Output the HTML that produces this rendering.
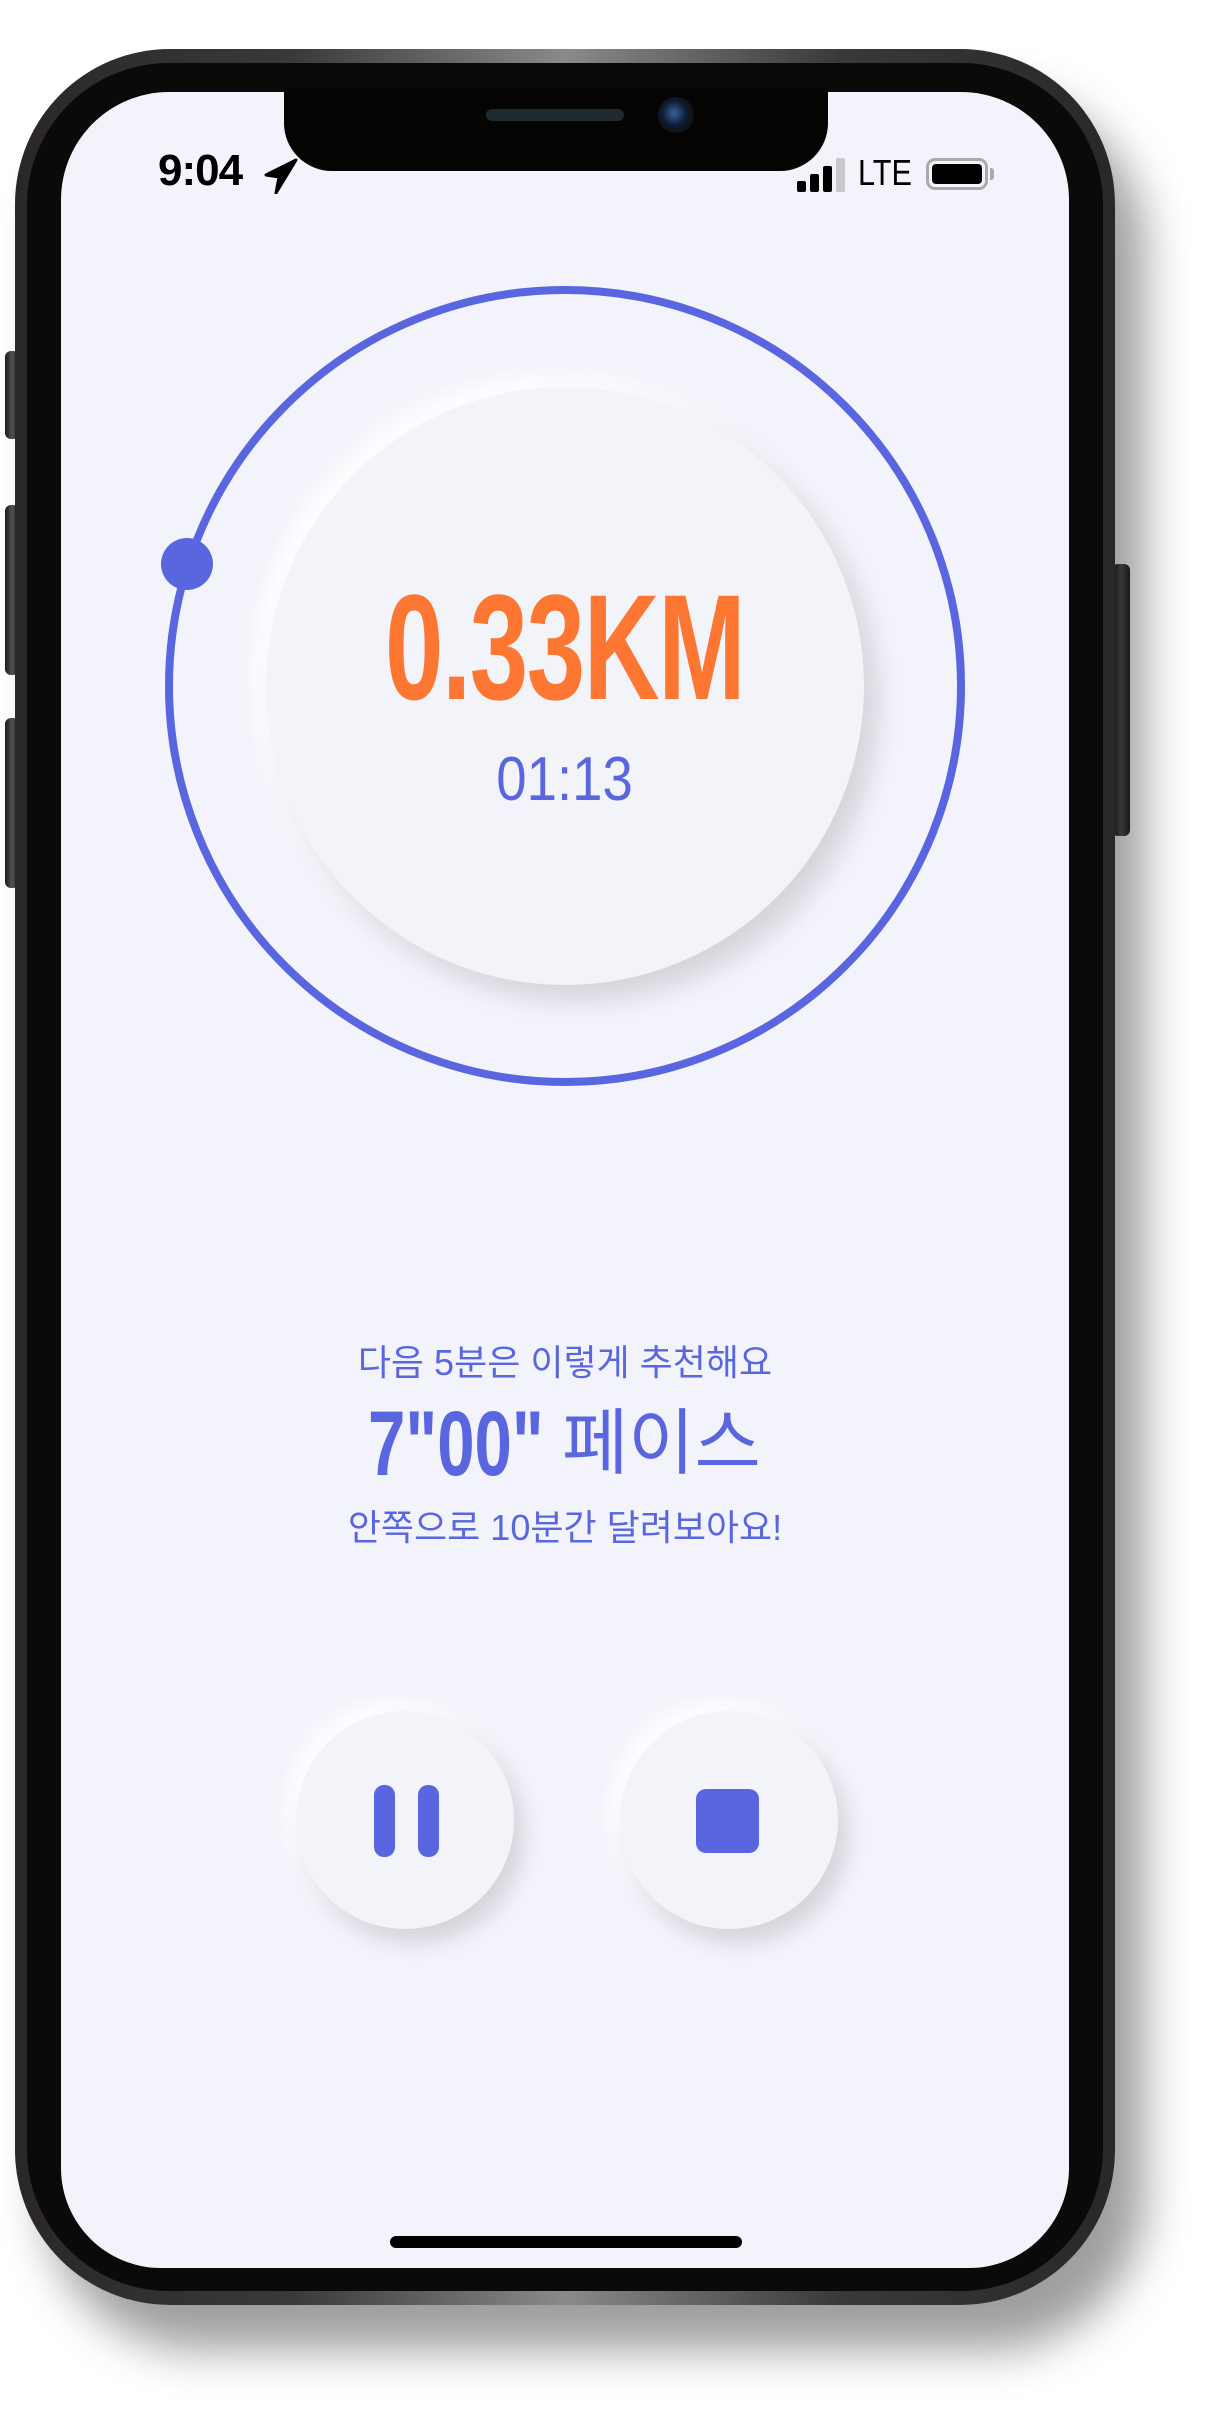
<!DOCTYPE html>
<html><head><meta charset="utf-8">
<style>
html,body{margin:0;padding:0;background:#fff;}
body{width:1210px;height:2415px;position:relative;overflow:hidden;font-family:"Liberation Sans","Noto Sans CJK KR",sans-serif;}
.abs{position:absolute;}
.btn{position:absolute;background:linear-gradient(90deg,#1a1a1a,#555 50%,#222);border-radius:6px;}
.outer{left:15px;top:49px;width:1100px;height:2256px;border-radius:155px;
 background:linear-gradient(90deg,#2a2727 0%,#3a3838 25%,#8a8a8a 50%,#3a3838 75%,#2a2727 100%);
 box-shadow:30px 45px 45px rgba(0,0,0,.38);}
.bezel{left:27px;top:63px;width:1076px;height:2228px;border-radius:142px;background:#0b0909;}
.screen{left:61px;top:92px;width:1008px;height:2176px;border-radius:108px 108px 100px 100px;background:#f3f4fb;overflow:hidden;}
.blue{color:#5a66df;}
.c{position:absolute;left:0;width:1130px;text-align:center;white-space:nowrap;}
</style></head><body>
<div class="btn" style="left:5px;top:351px;width:14px;height:88px"></div>
<div class="btn" style="left:5px;top:505px;width:14px;height:170px"></div>
<div class="btn" style="left:5px;top:718px;width:14px;height:170px"></div>
<div class="btn" style="left:1112px;top:564px;width:18px;height:272px"></div>
<div class="abs outer"></div>
<div class="abs bezel"></div>
<div class="abs screen"></div>

<!-- notch -->
<div class="abs" style="left:284px;top:88px;width:544px;height:83px;background:#060303;border-radius:0 0 48px 48px;"></div>
<div class="abs" style="left:486px;top:109px;width:138px;height:12px;background:#1e2a2e;border-radius:6px;"></div>
<div class="abs" style="left:658px;top:97px;width:36px;height:36px;border-radius:50%;background:radial-gradient(circle at 45% 45%,#3a5f9a 0,#0c1a33 45%,#111 70%,#333 100%);"></div>

<!-- status bar -->
<div class="abs" style="left:158px;top:146px;font-size:44px;font-weight:bold;color:#000;letter-spacing:-1px;">9:04</div>
<svg class="abs" style="left:264px;top:158px" width="34" height="36" viewBox="0 0 34 36"><path d="M32 2 L2 17 L15 19 L12 35 Z" fill="#000" stroke="#000" stroke-width="3" stroke-linejoin="round"/></svg>
<div class="abs" style="left:797px;top:181px;width:9px;height:11px;background:#000;border-radius:2px"></div>
<div class="abs" style="left:810px;top:174px;width:9px;height:18px;background:#000;border-radius:2px"></div>
<div class="abs" style="left:823px;top:166px;width:9px;height:26px;background:#000;border-radius:2px"></div>
<div class="abs" style="left:836px;top:158px;width:9px;height:34px;background:#c8c8cc;border-radius:2px"></div>
<div class="abs" style="left:858px;top:152px;font-size:36px;color:#000;transform:scaleX(.85);transform-origin:left;">LTE</div>
<div class="abs" style="left:926px;top:158px;width:62px;height:32px;border:3px solid #aaa;border-radius:9px;box-sizing:border-box;"></div>
<div class="abs" style="left:932px;top:164px;width:50px;height:20px;background:#000;border-radius:4px;"></div>
<div class="abs" style="left:990px;top:168px;width:4px;height:12px;background:#aaa;border-radius:0 3px 3px 0;"></div>

<!-- inner circle -->
<div class="abs" style="left:266px;top:387px;width:598px;height:598px;border-radius:50%;background:#f3f4fa;box-shadow:14px 16px 26px rgba(0,0,0,.13),-12px -12px 22px rgba(255,255,255,.9);"></div>
<!-- ring -->
<svg class="abs" style="left:0;top:0" width="1210" height="1200">
<circle cx="565" cy="686" r="396" fill="none" stroke="#5a66df" stroke-width="8"/>
<circle cx="187" cy="564" r="26" fill="#5a66df"/>
</svg>

<div class="c" style="top:572px;font-size:150px;font-weight:bold;color:#fd7733;line-height:150px;"><span style="display:inline-block;transform:scaleX(.7);letter-spacing:-2px;">0.33KM</span></div>
<div class="c blue" style="top:740px;font-size:62px;line-height:80px;"><span style="display:inline-block;transform:scaleX(.88)">01:13</span></div>

<div class="c blue" style="top:1338px;font-size:36px;line-height:50px;">다음 5분은 이렇게 추천해요</div>
<div class="abs blue" style="left:368px;top:1396px;font-weight:bold;font-size:92px;line-height:96px;transform:scaleX(.73);transform-origin:left;white-space:nowrap;">7"00"</div>
<div class="abs blue" style="left:562px;top:1396px;font-size:72px;line-height:96px;white-space:nowrap;">페이스</div>
<div class="c blue" style="top:1503px;font-size:36px;line-height:50px;">안쪽으로 10분간 달려보아요!</div>

<!-- buttons -->
<div class="abs" style="left:296px;top:1711px;width:218px;height:218px;border-radius:50%;background:#f3f4fa;box-shadow:10px 14px 22px rgba(0,0,0,.13),-10px -10px 20px rgba(255,255,255,.9);"></div>
<div class="abs" style="left:374px;top:1785px;width:21px;height:72px;border-radius:10px;background:#5a66df"></div>
<div class="abs" style="left:418px;top:1785px;width:21px;height:72px;border-radius:10px;background:#5a66df"></div>
<div class="abs" style="left:620px;top:1711px;width:218px;height:218px;border-radius:50%;background:#f3f4fa;box-shadow:10px 14px 22px rgba(0,0,0,.13),-10px -10px 20px rgba(255,255,255,.9);"></div>
<div class="abs" style="left:696px;top:1789px;width:63px;height:64px;border-radius:10px;background:#5a66df"></div>

<div class="abs" style="left:390px;top:2236px;width:352px;height:12px;border-radius:6px;background:#000"></div>
</body></html>
